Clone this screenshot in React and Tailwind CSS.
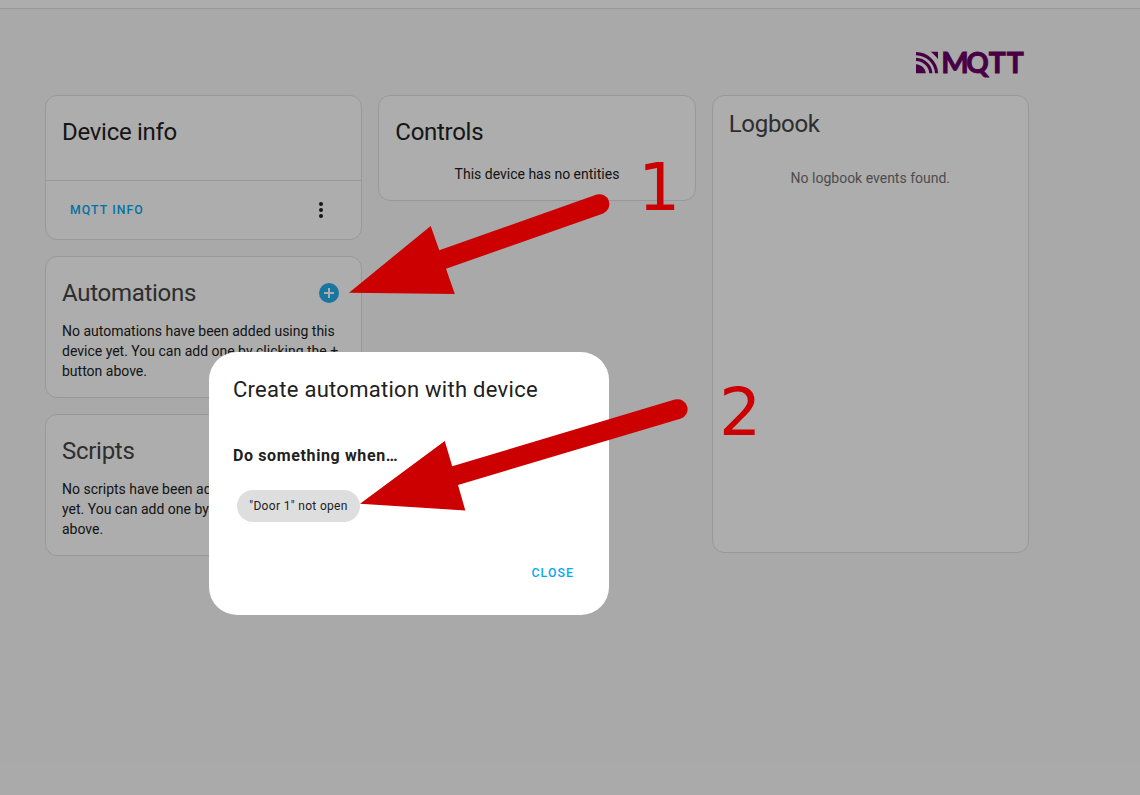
function Card({ className = "", children }) {
  return (
    <section className={`rounded-xl border border-[#e0e0e0] bg-white ${className}`}>
      {children}
    </section>
  );
}

function CardTitle({ className = "text-[#444444]", children }) {
  return (
    <h1 className={`text-2xl leading-[48px] font-normal tracking-[-0.012em] ${className}`}>
      {children}
    </h1>
  );
}

function MqttLogo() {
  return (
    <svg className="h-[44px] w-[116px] overflow-visible" viewBox="-1 -8.700 116 44" fill="#6b0066" aria-label="MQTT">
      <path d="M2 23.500V14.500C7.500 15 11.200 18.500 11.800 23.500Z" />
      <g fill="none" stroke="#6b0066" strokeWidth="3.200">
        <path d="M2 9.700C10 10 16.500 16 16.800 23.500" />
        <path d="M2 4C13 4.200 22 12.500 22.500 23.500" />
      </g>
      <path d="M16.500 2H24V9.500C21.800 6.500 19.500 4 16.500 2Z" />
      <g fontSize="28.500" fontWeight="700" fontFamily="Lato, sans-serif" stroke="#6b0066" strokeWidth="0.900">
        <text x="27.200" y="23.300" textLength="27.500" lengthAdjust="spacingAndGlyphs">M</text>
        <text x="52.300" y="23.300" textLength="22.500" lengthAdjust="spacingAndGlyphs">Q</text>
        <text x="74.700" y="23.300" textLength="17" lengthAdjust="spacingAndGlyphs">T</text>
        <text x="92.700" y="23.300" textLength="17" lengthAdjust="spacingAndGlyphs">T</text>
      </g>
    </svg>
  );
}

function Dialog() {
  return (
    <div className="absolute top-[352px] left-[209px] flex h-[263px] w-[400px] flex-col rounded-[28px] bg-white px-6 pt-[22px] text-[#212121]">
      <h2 className="text-[22px] leading-8 tracking-[0.0125em] whitespace-nowrap">
        Create automation with device
      </h2>
      <h3 className="mt-[38px] text-base leading-6 font-bold tracking-[0.039em]">
        Do something when…
      </h3>
      <div className="mt-[22px] ml-1 flex h-8 w-[123px] items-center justify-center rounded-full bg-[#dedede] text-xs tracking-[0.0275em] whitespace-nowrap">
        {'"Door 1" not open'}
      </div>
      <button className="mt-[33px] mr-[11px] self-end text-[12.25px] leading-9 font-medium tracking-[0.0893em] text-[#03a9f4]">
        CLOSE
      </button>
    </div>
  );
}

function Arrows() {
  return (
    <svg
      className="absolute top-0 left-0 h-[795px] w-[1140px]"
      viewBox="0 0 1140 795"
      fill="#cc0000"
    >
      <path d="M349 292.700 L430.700 226 L439.300 250.200 L596.800 194.500 A10 10 0 0 1 603.200 213.400 L446 268.800 L454.800 294 Z" />
      <path d="M360 503.700 L444.800 441 L452.200 466.200 L674.800 399.600 A10 10 0 0 1 680.400 418.800 L458 485 L465.300 510.500 Z" />
      <g fontFamily="'DejaVu Sans', sans-serif" fontSize="66.500">
        <text x="638" y="210.300">1</text>
        <text x="719" y="435.300">2</text>
      </g>
    </svg>
  );
}

export default function App() {
  return (
    <div className="relative h-[795px] w-[1140px] overflow-hidden bg-[#fafafa] font-['Roboto',sans-serif] text-sm leading-5 text-[#212121]">
      <header className="h-[9px] border-b border-[#e0e0e0] bg-white" />
      <main className="ml-[45px] w-[984px]">
        <div className="flex h-[86px] items-end justify-end pb-[10px]">
          <MqttLogo />
        </div>
        <div className="grid grid-cols-3 items-start gap-4">
          <div className="flex flex-col gap-4">
            <Card className="h-[145px]">
              <div className="h-[84px] px-4 pt-3">
                <CardTitle className="text-[#212121]">Device info</CardTitle>
              </div>
              <div className="flex h-[59px] items-center justify-between border-t border-[#e0e0e0] pr-[38px] pl-6">
                <button className="text-[12.25px] font-medium tracking-[0.0893em] text-[#03a9f4]">
                  MQTT INFO
                </button>
                <svg className="h-4 w-1" viewBox="0 0 4 16" fill="#212121">
                  <circle cx="2" cy="2" r="2" />
                  <circle cx="2" cy="8" r="2" />
                  <circle cx="2" cy="14" r="2" />
                </svg>
              </div>
            </Card>
            <Card className="h-[142px] px-4 pt-3">
              <div className="flex items-center justify-between pr-[6px]">
                <CardTitle>Automations</CardTitle>
                <svg className="h-5 w-5" viewBox="0 0 20 20">
                  <circle cx="10" cy="10" r="10" fill="#26afee" />
                  <path d="M10 5V15M5 10H15" stroke="white" strokeWidth="2" />
                </svg>
              </div>
              <p className="mt-1">
                No automations have been added using this device yet. You can add one by clicking
                the + button above.
              </p>
            </Card>
            <Card className="h-[142px] px-4 pt-3">
              <CardTitle>Scripts</CardTitle>
              <p className="mt-1">
                No scripts have been added using this device yet. You can add one by clicking the +
                button above.
              </p>
            </Card>
          </div>
          <Card className="h-[106px] px-4 pt-3">
            <CardTitle className="text-[#212121]">Controls</CardTitle>
            <p className="mt-2 text-center">This device has no entities</p>
          </Card>
          <Card className="h-[458px] px-4 pt-1">
            <CardTitle>Logbook</CardTitle>
            <p className="mt-5 text-center text-[#727272]">No logbook events found.</p>
          </Card>
        </div>
      </main>
      <div className="absolute inset-0 bg-black/32" />
      <Dialog />
      <Arrows />
    </div>
  );
}
